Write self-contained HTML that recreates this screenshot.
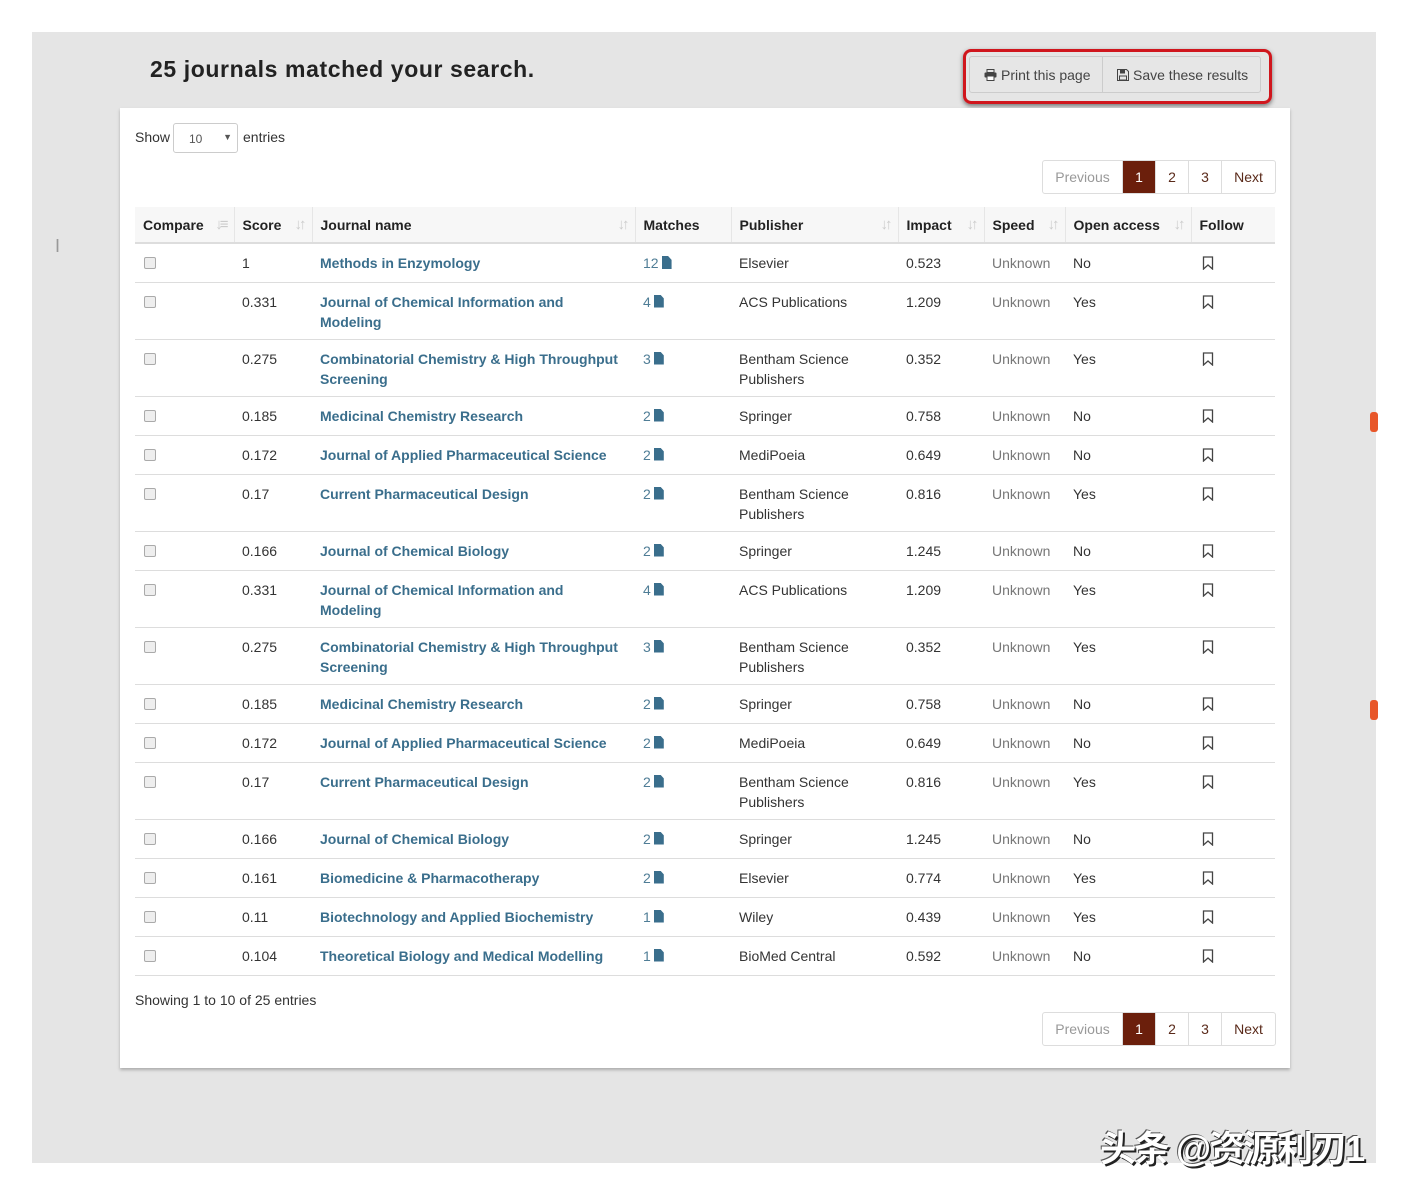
<!DOCTYPE html>
<html><head><meta charset="utf-8"><style>
*{box-sizing:border-box;margin:0;padding:0}
body{width:1408px;height:1195px;background:#fff;font-family:"Liberation Sans",Arial,sans-serif;font-size:14px;color:#333;position:relative;overflow:hidden}
#bg{position:absolute;left:32px;top:32px;width:1344px;height:1131px;background:#e5e5e5}
h1{position:absolute;left:150px;top:56px;font-size:23px;font-weight:bold;color:#222;letter-spacing:0.6px}
#btnwrap{position:absolute;left:963px;top:49px;width:309px;height:55px;border:3px solid #d0161d;border-radius:8px;box-shadow:0 2px 5px rgba(0,0,0,.5)}
#btns{position:absolute;left:969px;top:56px;width:292px;height:37px;border:1px solid #ccc;border-radius:3px;background:#e6e6e6;display:flex;font-size:14px;color:#444}
#btns div{display:flex;align-items:center;padding-left:14px;gap:4px}
#btns div:first-child{width:133px;border-right:1px solid #ccc}
#card{position:absolute;left:120px;top:108px;width:1170px;height:960px;background:#fff;box-shadow:0 2px 3px rgba(0,0,0,.25)}
.abs{position:absolute}
.sel{position:absolute;left:173px;top:123px;width:65px;height:30px;border:1px solid #ccc;border-radius:3px;font-size:12px;color:#555;padding:8px 0 0 15px}
.sel span{position:absolute;right:5px;top:8px;font-size:9px}
.pag{position:absolute;left:1042px;height:34px;display:flex;border:1px solid #ddd;border-radius:3px;font-size:14px}
.pag div{height:32px;line-height:32px;text-align:center;border-left:1px solid #ddd;color:#5a2a1a}
.pag div:first-child{border-left:none;width:79px;color:#999}
.pag .a{background:#6b1f0c;color:#fff;width:33px}
table{position:absolute;left:135px;top:207px;width:1140px;border-collapse:collapse;table-layout:fixed}
th{background:#f7f7f7;height:36px;text-align:left;font-weight:bold;font-size:14px;color:#222;padding:0 8px;border-right:1px solid #e6e6e6;border-bottom:2px solid #ddd;position:relative}
th:last-child{border-right:none}
th i{position:absolute;right:8px;top:9px;color:#ccc;font-style:normal;font-size:15px;font-weight:normal;letter-spacing:-3px}
td{vertical-align:top;padding:9px 8px 0;border-bottom:1px solid #ddd;line-height:20px;font-size:14px}
td.cb div{width:12px;height:12px;border:1px solid #aaa;border-radius:2px;background:#eee;margin:4px 0 0 1px}
td.j{color:#3a6e8c;font-weight:bold}
td.m{color:#4f7d96}
.doc{display:inline-block;width:10px;height:13px;background:#3a6e8c;vertical-align:-1px;margin-left:3px;clip-path:polygon(0 0,65% 0,100% 30%,100% 100%,0 100%)}
td.s{color:#777}
.r1{height:39px}.r2{height:57px}
#wm{position:absolute;left:1100px;top:1120px;font-family:"Liberation Sans","Noto Sans CJK SC",sans-serif;font-size:36px;font-weight:bold;color:#fff;text-shadow:2px 2px 0 #222,-1px -1px 0 #555;letter-spacing:-2px;white-space:nowrap}
.or{position:absolute;left:1370px;width:8px;height:20px;background:#e8572a;border-radius:3px}
</style></head><body>
<div id="bg"></div>
<h1>25 journals matched your search.</h1>
<div id="btnwrap"></div>
<div id="btns"><div><svg width="13" height="12" viewBox="0 0 13 12"><rect x="3" y="0.5" width="7" height="3" fill="none" stroke="#444"/><rect x="0.5" y="3.5" width="12" height="5" rx="1" fill="#444"/><rect x="3" y="7" width="7" height="4.5" fill="#fff" stroke="#444"/></svg>Print this page</div><div><svg width="12" height="12" viewBox="0 0 12 12"><path d="M0.5 0.5H9.5L11.5 2.5V11.5H0.5Z" fill="none" stroke="#444"/><rect x="3" y="1" width="5" height="3.5" fill="#444"/><rect x="2.5" y="7" width="7" height="4" fill="none" stroke="#444"/></svg>Save these results</div></div>
<div id="card"></div>
<div class="abs" style="left:135px;top:129px">Show</div>
<div class="sel">10<span>▼</span></div>
<div class="abs" style="left:243px;top:129px">entries</div>
<div class="pag" style="top:160px"><div>Previous</div><div class="a">1</div><div style="width:33px">2</div><div style="width:33px">3</div><div style="width:54px">Next</div></div>
<table>
<colgroup><col style="width:99px"><col style="width:78px"><col style="width:323px"><col style="width:96px"><col style="width:167px"><col style="width:86px"><col style="width:81px"><col style="width:126px"><col style="width:84px"></colgroup>
<tr><th>Compare<i>↓≡</i></th><th>Score<i>↓↑</i></th><th>Journal name<i>↓↑</i></th><th>Matches</th><th>Publisher<i>↓↑</i></th><th>Impact<i>↓↑</i></th><th>Speed<i>↓↑</i></th><th>Open access<i>↓↑</i></th><th>Follow</th></tr>
<tr class="r1"><td class="cb"><div></div></td><td>1</td><td class="j">Methods in Enzymology</td><td class="m">12<span class="doc"></span></td><td>Elsevier</td><td>0.523</td><td class="s">Unknown</td><td>No</td><td><svg class="bm" width="12" height="14" viewBox="0 0 12 14" style="margin:3px 0 0 3px"><path d="M1.5 1H10.5V13L6 9L1.5 13Z" fill="none" stroke="#444" stroke-width="1.3"/></svg></td></tr>
<tr class="r2"><td class="cb"><div></div></td><td>0.331</td><td class="j">Journal of Chemical Information and Modeling</td><td class="m">4<span class="doc"></span></td><td>ACS Publications</td><td>1.209</td><td class="s">Unknown</td><td>Yes</td><td><svg width="12" height="14" viewBox="0 0 12 14" style="margin:3px 0 0 3px"><path d="M1.5 1H10.5V13L6 9L1.5 13Z" fill="none" stroke="#444" stroke-width="1.3"/></svg></td></tr>
<tr class="r2"><td class="cb"><div></div></td><td>0.275</td><td class="j">Combinatorial Chemistry &amp; High Throughput Screening</td><td class="m">3<span class="doc"></span></td><td>Bentham Science Publishers</td><td>0.352</td><td class="s">Unknown</td><td>Yes</td><td><svg width="12" height="14" viewBox="0 0 12 14" style="margin:3px 0 0 3px"><path d="M1.5 1H10.5V13L6 9L1.5 13Z" fill="none" stroke="#444" stroke-width="1.3"/></svg></td></tr>
<tr class="r1"><td class="cb"><div></div></td><td>0.185</td><td class="j">Medicinal Chemistry Research</td><td class="m">2<span class="doc"></span></td><td>Springer</td><td>0.758</td><td class="s">Unknown</td><td>No</td><td><svg width="12" height="14" viewBox="0 0 12 14" style="margin:3px 0 0 3px"><path d="M1.5 1H10.5V13L6 9L1.5 13Z" fill="none" stroke="#444" stroke-width="1.3"/></svg></td></tr>
<tr class="r1"><td class="cb"><div></div></td><td>0.172</td><td class="j">Journal of Applied Pharmaceutical Science</td><td class="m">2<span class="doc"></span></td><td>MediPoeia</td><td>0.649</td><td class="s">Unknown</td><td>No</td><td><svg width="12" height="14" viewBox="0 0 12 14" style="margin:3px 0 0 3px"><path d="M1.5 1H10.5V13L6 9L1.5 13Z" fill="none" stroke="#444" stroke-width="1.3"/></svg></td></tr>
<tr class="r2"><td class="cb"><div></div></td><td>0.17</td><td class="j">Current Pharmaceutical Design</td><td class="m">2<span class="doc"></span></td><td>Bentham Science Publishers</td><td>0.816</td><td class="s">Unknown</td><td>Yes</td><td><svg width="12" height="14" viewBox="0 0 12 14" style="margin:3px 0 0 3px"><path d="M1.5 1H10.5V13L6 9L1.5 13Z" fill="none" stroke="#444" stroke-width="1.3"/></svg></td></tr>
<tr class="r1"><td class="cb"><div></div></td><td>0.166</td><td class="j">Journal of Chemical Biology</td><td class="m">2<span class="doc"></span></td><td>Springer</td><td>1.245</td><td class="s">Unknown</td><td>No</td><td><svg width="12" height="14" viewBox="0 0 12 14" style="margin:3px 0 0 3px"><path d="M1.5 1H10.5V13L6 9L1.5 13Z" fill="none" stroke="#444" stroke-width="1.3"/></svg></td></tr>
<tr class="r2"><td class="cb"><div></div></td><td>0.331</td><td class="j">Journal of Chemical Information and Modeling</td><td class="m">4<span class="doc"></span></td><td>ACS Publications</td><td>1.209</td><td class="s">Unknown</td><td>Yes</td><td><svg width="12" height="14" viewBox="0 0 12 14" style="margin:3px 0 0 3px"><path d="M1.5 1H10.5V13L6 9L1.5 13Z" fill="none" stroke="#444" stroke-width="1.3"/></svg></td></tr>
<tr class="r2"><td class="cb"><div></div></td><td>0.275</td><td class="j">Combinatorial Chemistry &amp; High Throughput Screening</td><td class="m">3<span class="doc"></span></td><td>Bentham Science Publishers</td><td>0.352</td><td class="s">Unknown</td><td>Yes</td><td><svg width="12" height="14" viewBox="0 0 12 14" style="margin:3px 0 0 3px"><path d="M1.5 1H10.5V13L6 9L1.5 13Z" fill="none" stroke="#444" stroke-width="1.3"/></svg></td></tr>
<tr class="r1"><td class="cb"><div></div></td><td>0.185</td><td class="j">Medicinal Chemistry Research</td><td class="m">2<span class="doc"></span></td><td>Springer</td><td>0.758</td><td class="s">Unknown</td><td>No</td><td><svg width="12" height="14" viewBox="0 0 12 14" style="margin:3px 0 0 3px"><path d="M1.5 1H10.5V13L6 9L1.5 13Z" fill="none" stroke="#444" stroke-width="1.3"/></svg></td></tr>
<tr class="r1"><td class="cb"><div></div></td><td>0.172</td><td class="j">Journal of Applied Pharmaceutical Science</td><td class="m">2<span class="doc"></span></td><td>MediPoeia</td><td>0.649</td><td class="s">Unknown</td><td>No</td><td><svg width="12" height="14" viewBox="0 0 12 14" style="margin:3px 0 0 3px"><path d="M1.5 1H10.5V13L6 9L1.5 13Z" fill="none" stroke="#444" stroke-width="1.3"/></svg></td></tr>
<tr class="r2"><td class="cb"><div></div></td><td>0.17</td><td class="j">Current Pharmaceutical Design</td><td class="m">2<span class="doc"></span></td><td>Bentham Science Publishers</td><td>0.816</td><td class="s">Unknown</td><td>Yes</td><td><svg width="12" height="14" viewBox="0 0 12 14" style="margin:3px 0 0 3px"><path d="M1.5 1H10.5V13L6 9L1.5 13Z" fill="none" stroke="#444" stroke-width="1.3"/></svg></td></tr>
<tr class="r1"><td class="cb"><div></div></td><td>0.166</td><td class="j">Journal of Chemical Biology</td><td class="m">2<span class="doc"></span></td><td>Springer</td><td>1.245</td><td class="s">Unknown</td><td>No</td><td><svg width="12" height="14" viewBox="0 0 12 14" style="margin:3px 0 0 3px"><path d="M1.5 1H10.5V13L6 9L1.5 13Z" fill="none" stroke="#444" stroke-width="1.3"/></svg></td></tr>
<tr class="r1"><td class="cb"><div></div></td><td>0.161</td><td class="j">Biomedicine &amp; Pharmacotherapy</td><td class="m">2<span class="doc"></span></td><td>Elsevier</td><td>0.774</td><td class="s">Unknown</td><td>Yes</td><td><svg width="12" height="14" viewBox="0 0 12 14" style="margin:3px 0 0 3px"><path d="M1.5 1H10.5V13L6 9L1.5 13Z" fill="none" stroke="#444" stroke-width="1.3"/></svg></td></tr>
<tr class="r1"><td class="cb"><div></div></td><td>0.11</td><td class="j">Biotechnology and Applied Biochemistry</td><td class="m">1<span class="doc"></span></td><td>Wiley</td><td>0.439</td><td class="s">Unknown</td><td>Yes</td><td><svg width="12" height="14" viewBox="0 0 12 14" style="margin:3px 0 0 3px"><path d="M1.5 1H10.5V13L6 9L1.5 13Z" fill="none" stroke="#444" stroke-width="1.3"/></svg></td></tr>
<tr class="r1"><td class="cb"><div></div></td><td>0.104</td><td class="j">Theoretical Biology and Medical Modelling</td><td class="m">1<span class="doc"></span></td><td>BioMed Central</td><td>0.592</td><td class="s">Unknown</td><td>No</td><td><svg width="12" height="14" viewBox="0 0 12 14" style="margin:3px 0 0 3px"><path d="M1.5 1H10.5V13L6 9L1.5 13Z" fill="none" stroke="#444" stroke-width="1.3"/></svg></td></tr>
</table>
<div class="abs" style="left:135px;top:992px">Showing 1 to 10 of 25 entries</div>
<div class="pag" style="top:1012px"><div>Previous</div><div class="a">1</div><div style="width:33px">2</div><div style="width:33px">3</div><div style="width:54px">Next</div></div>
<div class="abs" style="left:55px;top:236px;color:#999;font-size:18px">I</div>
<div class="or" style="top:412px"></div>
<div class="or" style="top:700px"></div>
<div id="wm">头条 @资源利刃1</div>
</body></html>
